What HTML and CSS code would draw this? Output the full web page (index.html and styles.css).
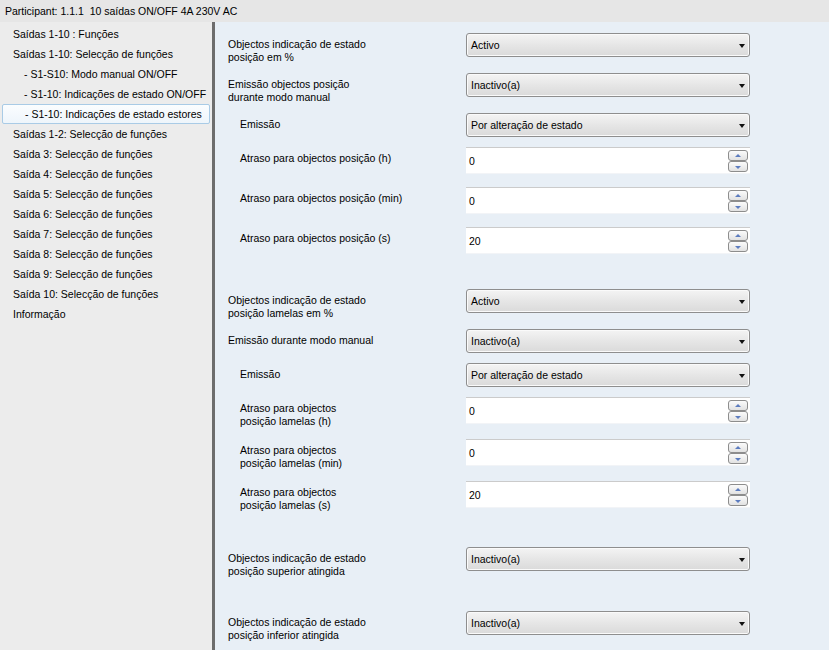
FILE: index.html
```html
<!doctype html>
<html>
	<head>
		<title>Participant 1.1.1</title>
		<meta charset="utf8">
		<link rel="stylesheet" href="styles.css">
	</head>
	<body>
		<div class="titlebar">Participant: 1.1.1&nbsp; 10 saídas ON/OFF 4A 230V AC</div>
		<div class="window">
			<ul class="tree">
				<li>Saídas 1-10 : Funções</li>
				<li>Saídas 1-10: Selecção de funções</li>
				<li class="sub">- S1-S10: Modo manual ON/OFF</li>
				<li class="sub">- S1-10: Indicações de estado ON/OFF</li>
				<li class="sub selected">- S1-10: Indicações de estado estores</li>
				<li>Saídas 1-2: Selecção de funções</li>
				<li>Saída 3: Selecção de funções</li>
				<li>Saída 4: Selecção de funções</li>
				<li>Saída 5: Selecção de funções</li>
				<li>Saída 6: Selecção de funções</li>
				<li>Saída 7: Selecção de funções</li>
				<li>Saída 8: Selecção de funções</li>
				<li>Saída 9: Selecção de funções</li>
				<li>Saída 10: Selecção de funções</li>
				<li>Informação</li>
			</ul>
			<div class="params">
				<div class="field">
					<span class="label">Objectos indicação de estado<br>posição em %</span>
					<div class="select">Activo</div>
				</div>
				<div class="field">
					<span class="label">Emissão objectos posição<br>durante modo manual</span>
					<div class="select">Inactivo(a)</div>
				</div>
				<div class="field compact">
					<span class="label indent">Emissão</span>
					<div class="select">Por alteração de estado</div>
				</div>
				<div class="field">
					<span class="label indent">Atraso para objectos posição (h)</span>
					<div class="spin"><span>0</span><span class="arrows"><i class="up"></i><i class="down"></i></span></div>
				</div>
				<div class="field">
					<span class="label indent">Atraso para objectos posição (min)</span>
					<div class="spin"><span>0</span><span class="arrows"><i class="up"></i><i class="down"></i></span></div>
				</div>
				<div class="field gap-sm">
					<span class="label indent">Atraso para objectos posição (s)</span>
					<div class="spin"><span>20</span><span class="arrows"><i class="up"></i><i class="down"></i></span></div>
				</div>

				<div class="field">
					<span class="label">Objectos indicação de estado<br>posição lamelas em %</span>
					<div class="select">Activo</div>
				</div>
				<div class="field compact">
					<span class="label">Emissão durante modo manual</span>
					<div class="select">Inactivo(a)</div>
				</div>
				<div class="field compact">
					<span class="label indent">Emissão</span>
					<div class="select">Por alteração de estado</div>
				</div>
				<div class="field tall">
					<span class="label indent">Atraso para objectos<br>posição lamelas (h)</span>
					<div class="spin"><span>0</span><span class="arrows"><i class="up"></i><i class="down"></i></span></div>
				</div>
				<div class="field tall">
					<span class="label indent">Atraso para objectos<br>posição lamelas (min)</span>
					<div class="spin"><span>0</span><span class="arrows"><i class="up"></i><i class="down"></i></span></div>
				</div>
				<div class="field tall gap">
					<span class="label indent">Atraso para objectos<br>posição lamelas (s)</span>
					<div class="spin"><span>20</span><span class="arrows"><i class="up"></i><i class="down"></i></span></div>
				</div>

				<div class="field gap">
					<span class="label">Objectos indicação de estado<br>posição superior atingida</span>
					<div class="select">Inactivo(a)</div>
				</div>
				<div class="field">
					<span class="label">Objectos indicação de estado<br>posição inferior atingida</span>
					<div class="select">Inactivo(a)</div>
				</div>
			</div>
		</div>
	</body>
</html>
```

FILE: styles.css
```css
* {
	margin: 0;
	padding: 0;
	box-sizing: border-box;
}
html,body {
	height: 100%;
	overflow: hidden;
}
body {
	font-family: "Liberation Sans", Arial, sans-serif;
	font-size: 10.5px;
	color: #000;
	background-color: #e9e9e9;
}
.titlebar {
	height: 22px;
	line-height: 22px;
	padding-left: 5px;
	background-color: #e6e6e6;
}
.window {
	display: flex;
	height: 628px;
}
.tree {
	list-style: none;
	width: 215px;
	padding-top: 2px;
	background-color: #ececec;
	border-right: 3px solid #6d6d6d;
	flex-shrink: 0;
}
.tree li {
	height: 20px;
	line-height: 20px;
	padding-left: 13px;
	white-space: nowrap;
}
.tree li.sub {
	padding-left: 24px;
}
.tree li.selected {
	margin: 0 0 0 2px;
	width: 208px;
	padding-left: 22px;
	line-height: 18px;
	border: 1px solid #a9cbe6;
	border-radius: 2px;
	background: linear-gradient(#fbfdff, #eef5fb);
}
.params {
	flex-grow: 1;
	padding: 11px 0 0 13px;
	background-color: #e8eff6;
}
.field {
	display: grid;
	grid-template-columns: 238px 284px;
	align-items: start;
	height: 40px;
}
.field.compact {
	height: 34px;
}
.field.tall {
	height: 42px;
}
.field.gap {
	margin-bottom: 24px;
}
.field.gap-sm {
	margin-bottom: 22px;
}
.label {
	padding-top: 5px;
	line-height: 13px;
}
.label.indent {
	padding-left: 12px;
}
.select {
	position: relative;
	height: 24px;
	line-height: 22px;
	padding-left: 4px;
	border: 1px solid #8e8e8e;
	border-radius: 3px;
	background: linear-gradient(#f4f4f4, #e6e6e6 50%, #dadada);
	box-shadow: inset 0 0 0 1px #fafafa;
}
.select::after {
	content: "";
	position: absolute;
	right: 4px;
	top: 10px;
	border-left: 3px solid transparent;
	border-right: 3px solid transparent;
	border-top: 4px solid #111;
}
.spin {
	display: flex;
	align-items: center;
	justify-content: space-between;
	height: 27px;
	padding: 0 2px 0 3px;
	background-color: #fff;
	border-top: 1px solid #cbcbcb;
	border-bottom: 1px solid #f2f4f7;
}
.arrows {
	display: flex;
	flex-direction: column;
}
.arrows i {
	position: relative;
	display: block;
	width: 20px;
	height: 11px;
	border: 1px solid #8d8d8d;
	border-radius: 3px;
	background: linear-gradient(#fbfbfb, #e2e2e2);
}
.arrows i::after {
	content: "";
	position: absolute;
	left: 6px;
	border-left: 3px solid transparent;
	border-right: 3px solid transparent;
}
.arrows i.up::after {
	top: 3px;
	border-bottom: 3px solid #5c7cbf;
}
.arrows i.down::after {
	top: 4px;
	border-top: 3px solid #5c7cbf;
}
```
